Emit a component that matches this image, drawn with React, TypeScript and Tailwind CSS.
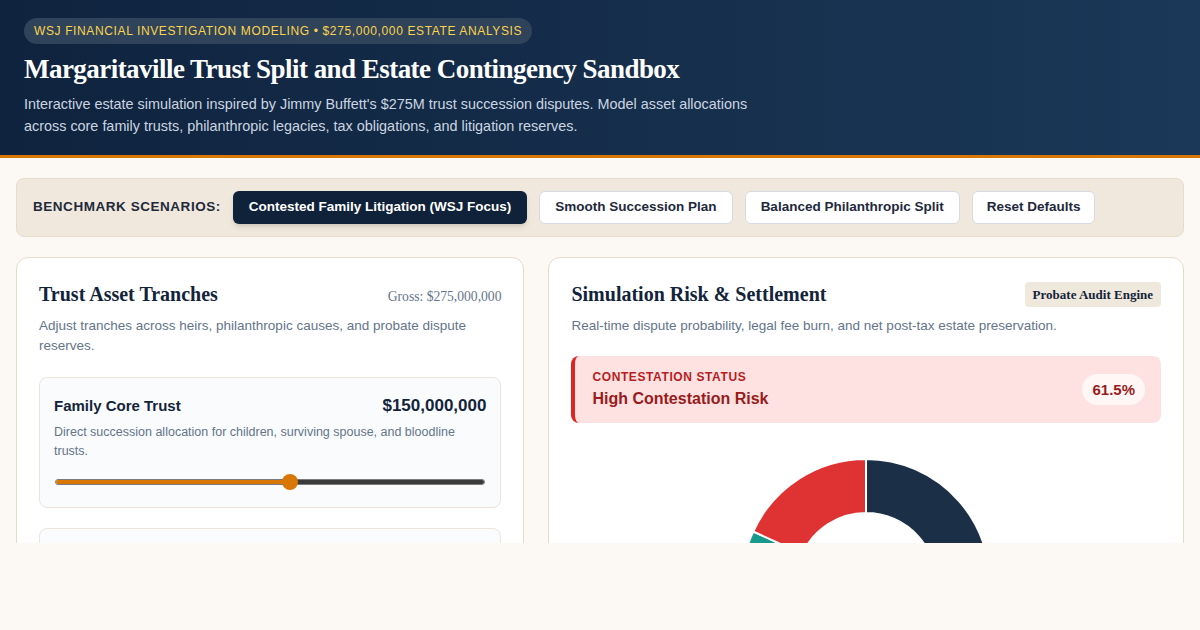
import React from "react";

const serif = { fontFamily: '"Liberation Serif", "Times New Roman", serif' };

function arcPath(cx: number, cy: number, R: number, r: number, a0: number, a1: number) {
  const rad = (a: number) => ((a - 90) * Math.PI) / 180;
  const p = (rr: number, a: number) => [cx + rr * Math.cos(rad(a)), cy + rr * Math.sin(rad(a))];
  const large = a1 - a0 > 180 ? 1 : 0;
  const [x0, y0] = p(R, a0);
  const [x1, y1] = p(R, a1);
  const [x2, y2] = p(r, a1);
  const [x3, y3] = p(r, a0);
  return `M${x0} ${y0} A${R} ${R} 0 ${large} 1 ${x1} ${y1} L${x2} ${y2} A${r} ${r} 0 ${large} 0 ${x3} ${y3} Z`;
}

const segments = [
  { v: 150, c: "#1b2f47" },
  { v: 45, c: "#d97706" },
  { v: 30, c: "#179a8c" },
  { v: 50, c: "#df3333" },
];

function Donut() {
  const total = segments.reduce((s, x) => s + x.v, 0);
  let a = 0;
  return (
    <svg width="252" height="252" viewBox="0 0 252 252">
      {segments.map((s, i) => {
        const a0 = a;
        const a1 = a + (s.v / total) * 360;
        a = a1;
        return <path key={i} d={arcPath(126, 126, 124, 70, a0, a1)} fill={s.c} stroke="#ffffff" strokeWidth="2" strokeLinejoin="round" />;
      })}
    </svg>
  );
}

export default function App() {
  return (
    <div className="min-h-[630px] bg-[#fcf9f4]" style={{ fontFamily: '"Liberation Sans", Arial, sans-serif' }}>
      <div className="h-[543px] overflow-hidden">
        <header className="h-[158px] bg-gradient-to-r from-[#0f233e] to-[#1b3858] border-b-[3px] border-[#d97706] px-6 pt-[18px]">
          <div className="inline-flex h-[26px] items-center rounded-full bg-[#2f435a] px-[10px] text-[12px] tracking-[0.052em] text-[#fcd34d]">
            WSJ FINANCIAL INVESTIGATION MODELING • $275,000,000 ESTATE ANALYSIS
          </div>
          <h1 className="mt-[8px] text-[27px] leading-[34px] font-bold tracking-[-0.02em] text-white" style={serif}>
            Margaritaville Trust Split and Estate Contingency Sandbox
          </h1>
          <p className="mt-[7px] max-w-[760px] text-[14.4px] leading-[22px] text-[#cbd5e1]">
            Interactive estate simulation inspired by Jimmy Buffett's $275M trust succession disputes. Model asset allocations across core family trusts, philanthropic legacies, tax obligations, and litigation reserves.
          </p>
        </header>

        <main className="px-4 pt-5">
          <div className="flex items-center gap-3 rounded-lg border border-[#e6dccb] bg-[#f0e8dc] px-4 py-3">
            <span className="text-[13.5px] font-bold tracking-[0.04em] text-[#1e293b]">BENCHMARK SCENARIOS:</span>
            <button className="h-[33px] rounded-md bg-[#0f2239] px-4 text-[13.5px] font-bold text-white shadow-md">
              Contested Family Litigation (WSJ Focus)
            </button>
            <button className="h-[33px] rounded-md border border-[#d6dbe2] bg-white px-[15px] text-[13.5px] font-bold text-[#1e293b]">
              Smooth Succession Plan
            </button>
            <button className="h-[33px] rounded-md border border-[#d6dbe2] bg-white px-[15px] text-[13.5px] font-bold text-[#1e293b]">
              Balanced Philanthropic Split
            </button>
            <button className="h-[33px] rounded-md border border-[#d6dbe2] bg-white px-[14px] text-[13.5px] font-bold text-[#1e293b]">
              Reset Defaults
            </button>
          </div>

          <div className="mt-[20px] grid grid-cols-[4fr_5fr] gap-6">
            <section className="rounded-xl border border-[#e6dccb] bg-white p-[22px] h-[400px]">
              <div className="flex items-baseline justify-between">
                <h2 className="text-[20px] leading-[28px] font-bold text-[#13243a]" style={serif}>
                  Trust Asset Tranches
                </h2>
                <span className="text-[13.6px] text-[#64748b]" style={serif}>Gross: $275,000,000</span>
              </div>
              <p className="mt-[8px] text-[13.5px] leading-[20px] text-[#64748b]">
                Adjust tranches across heirs, philanthropic causes, and probate dispute reserves.
              </p>
              <div className="mt-[21px] rounded-lg border border-[#ece6da] bg-[#fafbfd] px-[14px] pt-[16px] pb-[17px]">
                <div className="flex h-[24px] items-center justify-between">
                  <span className="text-[15px] font-bold text-[#13243a]">Family Core Trust</span>
                  <span className="text-[17px] font-bold text-[#13243a]">$150,000,000</span>
                </div>
                <p className="mt-[5px] text-[12.5px] leading-[19px] text-[#64748b]">
                  Direct succession allocation for children, surviving spouse, and bloodline trusts.
                </p>
                <div className="relative mt-[13px] h-[16px] px-[1px]">
                  <div className="absolute left-[1px] right-[1px] top-[5px] flex h-[6px] overflow-hidden rounded-full border border-[#7a7a7a]">
                    <div className="h-full w-[54.5%] bg-[#d97706]" />
                    <div className="h-full flex-1 bg-[#3b3b3b]" />
                  </div>
                  <div className="absolute top-0 h-[16px] w-[16px] -translate-x-1/2 rounded-full bg-[#d97706]" style={{ left: "54.5%" }} />
                </div>
              </div>
              <div className="mt-[20px] h-[120px] rounded-lg border border-[#ece6da] bg-[#fafbfd]" />
            </section>

            <section className="rounded-xl border border-[#e6dccb] bg-white p-[22px] h-[400px]">
              <div className="flex items-center justify-between">
                <h2 className="text-[20px] leading-[28px] font-bold text-[#13243a]" style={serif}>
                  Simulation Risk &amp; Settlement
                </h2>
                <span className="rounded bg-[#efe8dc] px-[8px] py-[4px] text-[13px] font-bold leading-[17px] text-[#13243a]" style={serif}>
                  Probate Audit Engine
                </span>
              </div>
              <p className="mt-[8px] text-[13.5px] leading-[20px] text-[#64748b]">
                Real-time dispute probability, legal fee burn, and net post-tax estate preservation.
              </p>
              <div className="mt-[20px] flex items-center justify-between rounded-lg border-l-4 border-[#dc2626] bg-[#fee2e2] py-[13px] pl-[17px] pr-[16px]">
                <div>
                  <div className="text-[12px] font-bold leading-[16px] tracking-[0.05em] text-[#b91c1c]">CONTESTATION STATUS</div>
                  <div className="mt-[3px] text-[16px] font-bold leading-[22px] text-[#991b1b]">High Contestation Risk</div>
                </div>
                <span className="rounded-full bg-[#fff7f5] px-[10px] py-[6px] text-[15px] font-bold leading-[19px] text-[#991b1b]">61.5%</span>
              </div>
              <div className="mt-[34px] flex justify-center">
                <Donut />
              </div>
            </section>
          </div>
        </main>
      </div>
    </div>
  );
}
